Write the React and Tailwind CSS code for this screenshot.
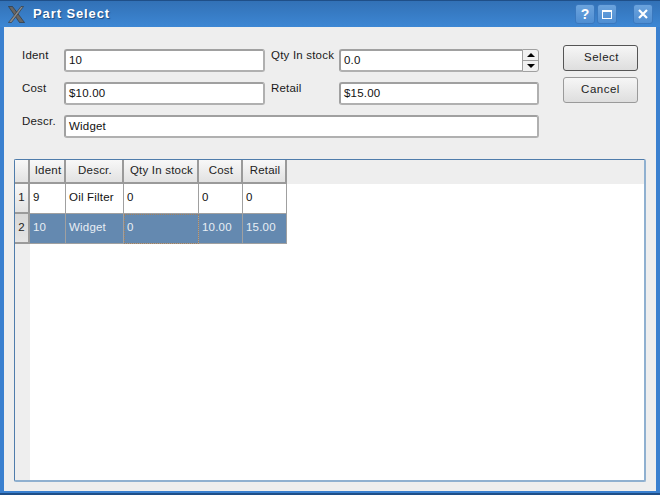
const font = { fontFamily: '"Liberation Sans", Arial, sans-serif' };

const Label = ({ children, className = "" }) => (
  <div className={`-mt-[1px] h-[22px] whitespace-nowrap text-[11.5px] leading-[14px] tracking-[0.2px] text-[#1a1a1a] ${className}`}>{children}</div>
);

const Input = ({ value, className = "" }) => (
  <div className={`flex h-[23px] items-center rounded-[3px] border-2 border-[#a0a0a0] border-b-[#b0b0b0] border-r-[#b0b0b0] bg-white pl-[3px] text-[11.5px] tracking-[0.2px] text-[#111] ${className}`}>
    {value}
  </div>
);

const HeaderCell = ({ children, w }) => (
  <div className={`flex h-[24px] ${w} shrink-0 items-center justify-center border-b-2 border-r-2 border-[#9a9a9a] bg-gradient-to-b from-[#f8f8f8] to-[#e2e2e2] pb-[1px] pl-[2px] text-[11.5px] tracking-[0.2px] text-[#222]`}>
    {children}
  </div>
);

const Cell = ({ children, w, selected, focus }) => (
  <div className={`flex h-[30px] ${w} shrink-0 items-center border-b border-r border-[#a0a0a0] pb-[2px] pl-[3px] text-[11.5px] tracking-[0.2px] ${selected ? "bg-[#6489b0] text-[#e8eef4]" : "bg-white text-[#111]"} ${focus ? "outline-1 -outline-offset-1 outline-dotted outline-[#a08060]" : ""}`}>
    {children}
  </div>
);

const TitleButton = ({ children, className = "" }) => (
  <div className={`flex h-[20px] w-[20px] items-center justify-center rounded-[3px] border border-[#3a78be] bg-gradient-to-b from-[#6ba3dd] to-[#4f8ed2] ${className}`}>
    {children}
  </div>
);

const columns = ["w-[36px]", "w-[58px]", "w-[75px]", "w-[44px]", "w-[44px]"];
const headers = ["Ident", "Descr.", "Qty In stock", "Cost", "Retail"];
const rows = [
  ["9", "Oil Filter", "0", "0", "0"],
  ["10", "Widget", "0", "10.00", "15.00"],
];

export default function App() {
  return (
    <div style={font} className="flex h-[495px] w-[660px] flex-col overflow-hidden bg-[#3a80cf]">
      {/* title bar */}
      <div className="flex h-[27px] shrink-0 items-center border-t border-[#1f4f88] bg-gradient-to-b from-[#3271b6] to-[#3d87d4] pl-[8px] pr-[7px]">
        <svg width="17" height="17" viewBox="0 0 17 17" className="shrink-0">
          <path d="M0.5 0.5 L4.5 0.5 L16.5 16.5 L11.5 16.5 Z" fill="#666666" stroke="#2e2e2e" strokeWidth="0.6" />
          <path d="M15.5 0.5 L13 0.5 L0.5 16.5 L3.5 16.5 Z" fill="#8a8a8a" stroke="#333333" strokeWidth="0.6" />
        </svg>
        <div className="ml-[8px] text-[13px] font-bold tracking-[0.9px] text-white [text-shadow:1px_1px_1px_#1c4a80]">Part Select</div>
        <div className="ml-auto flex gap-[2px]">
          <TitleButton>
            <span className="text-[14px] font-bold leading-none text-white">?</span>
          </TitleButton>
          <TitleButton>
            <div className="h-[9px] w-[10px] border border-t-2 border-white" />
          </TitleButton>
          <TitleButton className="ml-[14px]">
            <svg width="12" height="12" viewBox="0 0 12 12">
              <path d="M2 2 L10 10 M10 2 L2 10" stroke="white" strokeWidth="2.2" />
            </svg>
          </TitleButton>
        </div>
      </div>

      {/* window body */}
      <div className="mx-[4px] flex min-h-0 flex-1 flex-col bg-[#eeeeee] pb-[9px] pl-[10px] pr-[10px] pt-[18px]">
        <div className="flex pl-[8px]">
          <div className="mt-[4px] grid grid-cols-[42px_201px_74px_200px] gap-y-[10px]">
            <Label>Ident</Label>
            <Input value="10" />
            <Label className="pl-[6px]">Qty In stock</Label>
            <div className="flex h-[23px]">
              <Input value="0.0" className="min-w-0 flex-1 rounded-r-none border-r-0" />
              <div className="flex w-[17px] flex-col rounded-r-[3px] border border-[#a0a0a0] bg-[#f0f0f0]">
                <div className="flex flex-1 items-center justify-center border-b border-[#a0a0a0]">
                  <div className="h-0 w-0 border-x-[4px] border-b-[4px] border-x-transparent border-b-black" />
                </div>
                <div className="flex flex-1 items-center justify-center">
                  <div className="h-0 w-0 border-x-[4px] border-t-[4px] border-x-transparent border-t-black" />
                </div>
              </div>
            </div>
            <Label>Cost</Label>
            <Input value="$10.00" />
            <Label className="pl-[6px]">Retail</Label>
            <Input value="$15.00" />
            <Label>Descr.</Label>
            <Input value="Widget" className="col-span-3" />
          </div>
          <div className="ml-[24px] flex w-[75px] flex-col gap-[6px]">
            <div className="flex h-[26px] items-center justify-center rounded-[3px] border border-[#555] bg-gradient-to-b from-[#f6f6f6] to-[#dedede] pb-[1px] pl-[2px] text-[11.5px] tracking-[0.5px] text-[#222]">Select</div>
            <div className="flex h-[26px] items-center justify-center rounded-[3px] border border-[#9a9a9a] bg-gradient-to-b from-[#f6f6f6] to-[#dedede] pb-[1px] text-[11.5px] tracking-[0.5px] text-[#222]">Cancel</div>
          </div>
        </div>

        {/* table */}
        <div className="mt-[21px] flex min-h-0 flex-1 flex-col rounded-[2px] border border-[#8aa9c9] border-l-[#4f7cab] border-t-[#4f7cab] border-b-2 border-r-2 border-b-[#8fb0d0] border-r-[#8fb0d0]">
          <div className="flex bg-[#eeeeee]">
            <HeaderCell w="w-[15px]" />
            {headers.map((h, i) => (
              <HeaderCell key={h} w={columns[i]}>{h}</HeaderCell>
            ))}
          </div>
          <div className="flex min-h-0 flex-1 bg-white">
            <div className="flex w-[15px] shrink-0 flex-col bg-[#eeeeee]">
              {rows.map((_, i) => (
                <div key={i} className={`flex h-[30px] items-center justify-center border-b-2 border-r-2 border-[#9a9a9a] bg-gradient-to-b text-[11.5px] text-[#222] ${i === 1 ? "from-[#d8d8d8] to-[#e4e4e4]" : "from-[#f8f8f8] to-[#e2e2e2]"}`}>
                  {i + 1}
                </div>
              ))}
            </div>
            <div className="flex flex-col">
              {rows.map((row, r) => (
                <div key={r} className="flex">
                  {row.map((v, c) => (
                    <Cell key={c} w={columns[c]} selected={r === 1} focus={r === 1 && c === 2}>{v}</Cell>
                  ))}
                </div>
              ))}
            </div>
          </div>
        </div>
      </div>
      <div className="h-[2px] shrink-0 bg-[#3a80cf]" />
      <div className="h-[2px] shrink-0 bg-[#1f4f88]" />
    </div>
  );
}
